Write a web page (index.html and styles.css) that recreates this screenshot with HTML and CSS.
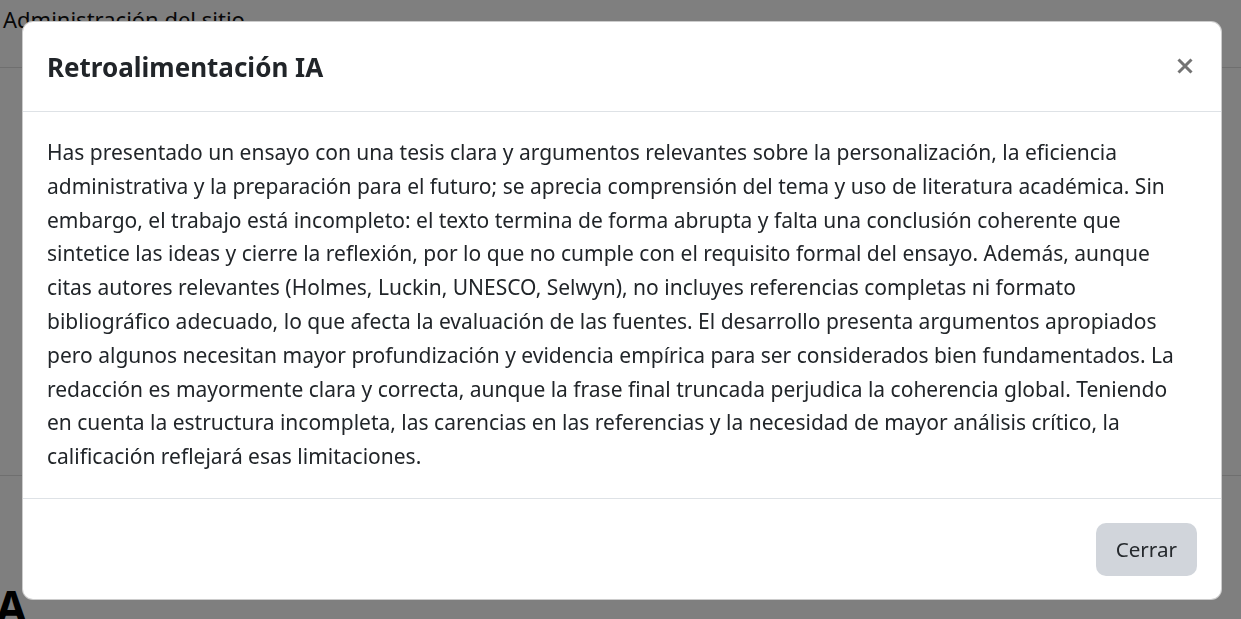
FILE: index.html
```html
<!DOCTYPE html>
<html lang="es">
<head>
<meta charset="utf-8">
<title>Retroalimentación IA</title>
<link rel="stylesheet" href="styles.css">
</head>
<body>
<div class="page">
  <div class="page-header">Administración del sitio</div>
  <div class="page-main"></div>
  <div class="page-section"><h2 class="page-title">A</h2></div>
</div>
<div class="backdrop">
  <div class="modal">
    <div class="modal-header">
      <h5 class="modal-title">Retroalimentación IA</h5>
      <button class="btn-close" aria-label="Cerrar">
        <svg width="18" height="18" viewBox="0 0 18 18"><path d="M2.5 2.5 L15.5 15.5 M15.5 2.5 L2.5 15.5" stroke="#737373" stroke-width="3" fill="none"/></svg>
      </button>
    </div>
    <div class="modal-body">
      <p>Has presentado un ensayo con una tesis clara y argumentos relevantes sobre la personalización, la eficiencia administrativa y la preparación para el futuro; se aprecia comprensión del tema y uso de literatura académica. Sin embargo, el trabajo está incompleto: el texto termina de forma abrupta y falta una conclusión coherente que sintetice las ideas y cierre la reflexión, por lo que no cumple con el requisito formal del ensayo. Además, aunque citas autores relevantes (Holmes, Luckin, UNESCO, Selwyn), no incluyes referencias completas ni formato bibliográfico adecuado, lo que afecta la evaluación de las fuentes. El desarrollo presenta argumentos apropiados pero algunos necesitan mayor profundización y evidencia empírica para ser considerados bien fundamentados. La redacción es mayormente clara y correcta, aunque la frase final truncada perjudica la coherencia global. Teniendo en cuenta la estructura incompleta, las carencias en las referencias y la necesidad de mayor análisis crítico, la calificación reflejará esas limitaciones.</p>
    </div>
    <div class="modal-footer">
      <button class="btn-secondary">Cerrar</button>
    </div>
  </div>
</div>
</body>
</html>
```

FILE: styles.css
```css
html, body {
  margin: 0;
  padding: 0;
  height: 100%;
  overflow: hidden;
}
body {
  font-family: "Noto Sans", "Open Sans", sans-serif;
  color: #212529;
  background: #fff;
}
.page {
  display: flex;
  flex-direction: column;
}
.page-header {
  height: 68px;
  padding: 3px 0 0 3px;
  box-sizing: border-box;
  font-size: 22px;
  line-height: 33px;
  color: #111;
  border-bottom: 1px solid #dedede;
}
.page-main {
  height: 407px;
  border-bottom: 1px solid #dedede;
}
.page-section {
  padding: 108px 0 0 0;
}
.page-title {
  margin: 0 0 0 -4px;
  font-size: 44px;
  font-weight: 700;
  line-height: 44px;
  color: #000;
}
.backdrop {
  position: fixed;
  inset: 0;
  background: rgba(0, 0, 0, 0.5);
  display: flex;
  align-items: flex-start;
  padding: 21px 0 0 22px;
}
.modal {
  width: 1200px;
  box-sizing: border-box;
  background: #fff;
  border: 1px solid rgba(0, 0, 0, 0.2);
  border-radius: 11px;
  display: flex;
  flex-direction: column;
}
.modal-header {
  display: flex;
  align-items: center;
  justify-content: space-between;
  height: 90px;
  box-sizing: border-box;
  padding: 0 24px 0 24px;
  border-bottom: 1px solid #dee2e6;
}
.modal-title {
  margin: 0;
  font-size: 26px;
  font-weight: 700;
  line-height: 36px;
  color: #212529;
}
.btn-close {
  border: 0;
  background: transparent;
  padding: 0;
  width: 18px;
  height: 18px;
  margin: -2px 3px 0 0;
  display: flex;
}
.modal-body {
  padding: 24px 24px 24px 24px;
  border-bottom: 1px solid #dee2e6;
}
.modal-body p {
  margin: 0;
  font-size: 21px;
  line-height: 33.8px;
  letter-spacing: 0;
}
.modal-footer {
  display: flex;
  justify-content: flex-end;
  padding: 24px 24px 23px 24px;
}
.btn-secondary {
  font-family: "Noto Sans", "Open Sans", sans-serif;
  font-size: 20.6px;
  color: #25292d;
  background: #d1d5db;
  border: 0;
  border-radius: 10px;
  height: 53px;
  padding: 0 20px;
}
```
